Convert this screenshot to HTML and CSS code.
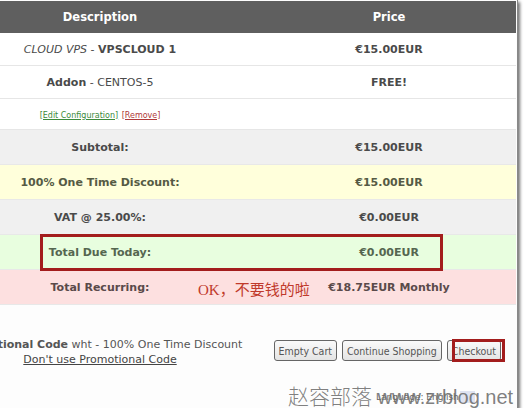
FILE: index.html
```html
<!DOCTYPE html>
<html>
<head>
    <title>Shopping Cart</title>
    <link rel="stylesheet" href="styles.css">
</head>
<body>

<div class="frame">
    <div class="cart">
        <div class="row head">
            <div class="cell">Description</div>
            <div class="cell">Price</div>
        </div>
        <div class="row item">
            <div class="cell"><em>CLOUD VPS</em> - <b>VPSCLOUD 1</b></div>
            <div class="cell"><b>€15.00EUR</b></div>
        </div>
        <div class="row item">
            <div class="cell"><b>Addon</b> - CENTOS-5</div>
            <div class="cell"><b>FREE!</b></div>
        </div>
        <div class="row item links">
            <div class="cell"><a href="#" class="edit">[Edit Configuration]</a> <a href="#" class="remove">[Remove]</a></div>
            <div class="cell"></div>
        </div>
        <div class="row total grey">
            <div class="cell">Subtotal:</div>
            <div class="cell">€15.00EUR</div>
        </div>
        <div class="row total yellow">
            <div class="cell">100% One Time Discount:</div>
            <div class="cell">€15.00EUR</div>
        </div>
        <div class="row total grey">
            <div class="cell">VAT @ 25.00%:</div>
            <div class="cell">€0.00EUR</div>
        </div>
        <div class="row total green">
            <div class="cell">Total Due Today:</div>
            <div class="cell">€0.00EUR</div>
        </div>
        <div class="row total pink">
            <div class="cell">Total Recurring:</div>
            <div class="cell">€18.75EUR Monthly</div>
        </div>

        <div class="row bottom">
            <div class="promo">
                <p><b>Promotional Code</b> wht - 100% One Time Discount</p>
                <p><a href="#">Don't use Promotional Code</a></p>
            </div>
            <div class="actions">
                <button>Empty Cart</button>
                <button>Continue Shopping</button>
                <button>Checkout</button>
            </div>
        </div>
    </div>

    <!-- annotations drawn over the screenshot -->
    <div class="mark mark-total"></div>
    <div class="mark mark-checkout"></div>
    <div class="note">OK，不要钱的啦</div>
    <div class="lang">Language: English</div>
    <div class="watermark"><span class="cn">赵容部落</span> www.zrblog.net</div>
</div>

</body>
</html>
```

FILE: styles.css
```css
body {
    margin: 0;
    background-color: #fff;
    font-family: 'DejaVu Sans', Verdana, sans-serif;
}

.frame {
    position: relative;
    width: 517px;
    height: 408px;
    overflow: hidden;
    background-color: #fdfdfd;
    border-right: 1px solid #888;
    box-shadow: 2px 2px 3px rgba(0, 0, 0, 0.55);
}

.cart {
    width: 578px;
    margin-left: -62px;
    margin-top: 1px;
}

.row {
    display: grid;
    grid-template-columns: 324px 254px;
    align-items: center;
    text-align: center;
    font-size: 11px;
    color: #4a4a4a;
}

.head {
    height: 32px;
    background-color: #5f5f5f;
    color: #fff;
    font-weight: bold;
    font-size: 11.5px;
}

.item {
    height: 32px;
    background-color: #fff;
    border-bottom: 1px solid #e6e6e6;
}

.item.links {
    height: 30px;
}

.links a {
    font-size: 8px;
}

.links .edit {
    color: #3b8a3b;
}

.links .remove {
    color: #b03a3a;
}

.total {
    height: 34px;
    font-weight: bold;
    border-bottom: 1px solid #e8e8e8;
}

.grey {
    background-color: #f0f0f0;
}

.yellow {
    background-color: #ffffdb;
    color: #555a44;
}

.green {
    background-color: #e8fedf;
    color: #556650;
}

.pink {
    background-color: #fde0e0;
    color: #5a4a4a;
}

.bottom {
    margin-top: 33px;
    align-items: start;
}

.promo p {
    margin: 0 0 2px;
    color: #555;
    white-space: nowrap;
}

.promo a {
    color: #444;
}

.actions {
    display: flex;
    justify-content: flex-end;
    gap: 5px;
    padding-right: 15px;
    padding-top: 2px;
}

.actions button {
    height: 21px;
    padding: 0 4px;
    white-space: nowrap;
    font-family: 'DejaVu Sans Condensed', 'DejaVu Sans', sans-serif;
    font-size: 10.5px;
    color: #555;
    background: linear-gradient(#fafafa, #e4e4e4);
    border: 1px solid #666;
    border-radius: 3px;
}

.mark {
    position: absolute;
    border: 3px solid #a31d1d;
}

.mark-total {
    left: 40px;
    top: 234px;
    width: 397px;
    height: 31px;
}

.mark-checkout {
    left: 452px;
    top: 339px;
    width: 47px;
    height: 17px;
}

.note {
    position: absolute;
    left: 198px;
    top: 278px;
    font-family: 'Liberation Serif', 'Noto Sans CJK SC', serif;
    font-size: 15px;
    color: #c0392b;
}

.lang {
    position: absolute;
    left: 372px;
    top: 391px;
    padding: 1px 16px 1px 4px;
    font-size: 9px;
    color: #666;
    background: linear-gradient(90deg, transparent 88px, #dfe3f0 88px);
}

.watermark {
    position: absolute;
    left: 288px;
    top: 380px;
    font-family: 'Liberation Sans', sans-serif;
    font-size: 20px;
    color: rgba(105, 105, 105, 0.85);
    white-space: nowrap;
}

.watermark .cn {
    font-family: 'Noto Sans CJK SC', sans-serif;
    font-weight: 300;
    font-size: 21px;
}
```
